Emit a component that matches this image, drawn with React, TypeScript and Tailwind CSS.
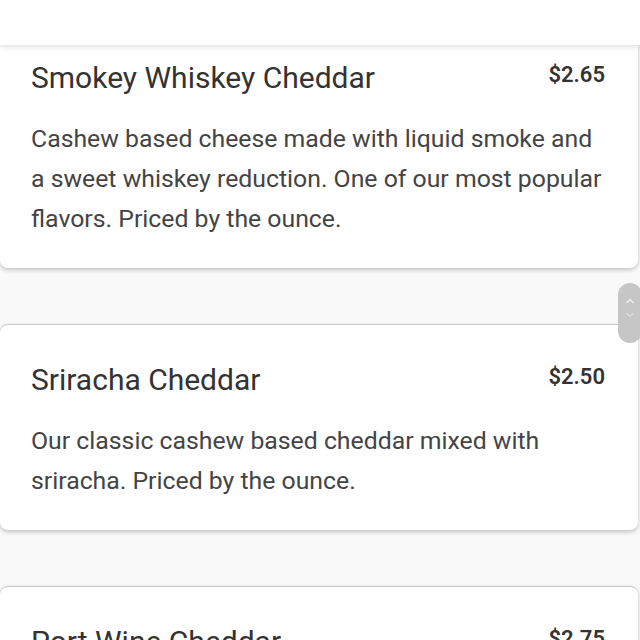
const items = [
  {
    name: "Smokey Whiskey Cheddar",
    price: "$2.65",
    desc: "Cashew based cheese made with liquid smoke and a sweet whiskey reduction. One of our most popular flavors. Priced by the ounce.",
  },
  {
    name: "Sriracha Cheddar",
    price: "$2.50",
    desc: "Our classic cashew based cheddar mixed with sriracha. Priced by the ounce.",
  },
  {
    name: "Port Wine Cheddar",
    price: "$2.75",
    desc: "Cashew based cheddar blended with port wine. Priced by the ounce.",
  },
];

function ItemCard({ name, price, desc, first }: { name: string; price: string; desc: string; first?: boolean }) {
  return (
    <div
      className={`mr-[2px] rounded-lg bg-white pl-[31px] pr-[33px] pt-[38px] pb-[29px] shadow-[0_2px_4px_rgba(0,0,0,0.22)] ${
        first ? "" : "border-t border-[#c9c9c9]"
      }`}
    >
      <div className="flex items-center justify-between">
        <h3 className="text-[30px] leading-[34px] text-[#333]">{name}</h3>
        <span className="-mt-[6px] text-[22px] font-semibold leading-[28px] text-[#333]">{price}</span>
      </div>
      <p className="-mr-[4px] mt-[24px] text-[24.8px] leading-[40px] text-[#444]">{desc}</p>
    </div>
  );
}

export default function App() {
  return (
    <div className="relative h-[640px] w-[640px] overflow-hidden bg-[#f9f9f9] [font-family:Roboto,'Noto_Sans',sans-serif]">
      <div className="relative z-10 h-[45px] bg-white shadow-[0_2px_6px_rgba(0,0,0,0.12)]" />

      <div className="-mt-[22px] flex flex-col gap-[56px]">
        {items.map((item, i) => (
          <ItemCard key={item.name} {...item} first={i === 0} />
        ))}
      </div>

      {/* scroll thumb overlay */}
      <div className="absolute right-[-2px] top-[283px] flex h-[60px] w-[24px] flex-col items-center rounded-full bg-[#c6c6c6] pt-[14px]">
        <svg width="10" height="8" viewBox="0 0 10 8" fill="none" stroke="#eee" strokeWidth="1.5">
          <path d="M1.5 6 L5 2.5 L8.5 6" />
        </svg>
        <svg className="mt-[6px]" width="10" height="8" viewBox="0 0 10 8" fill="none" stroke="#ddd" strokeWidth="1.2">
          <path d="M1.5 2 L5 5.5 L8.5 2" />
        </svg>
      </div>
    </div>
  );
}
